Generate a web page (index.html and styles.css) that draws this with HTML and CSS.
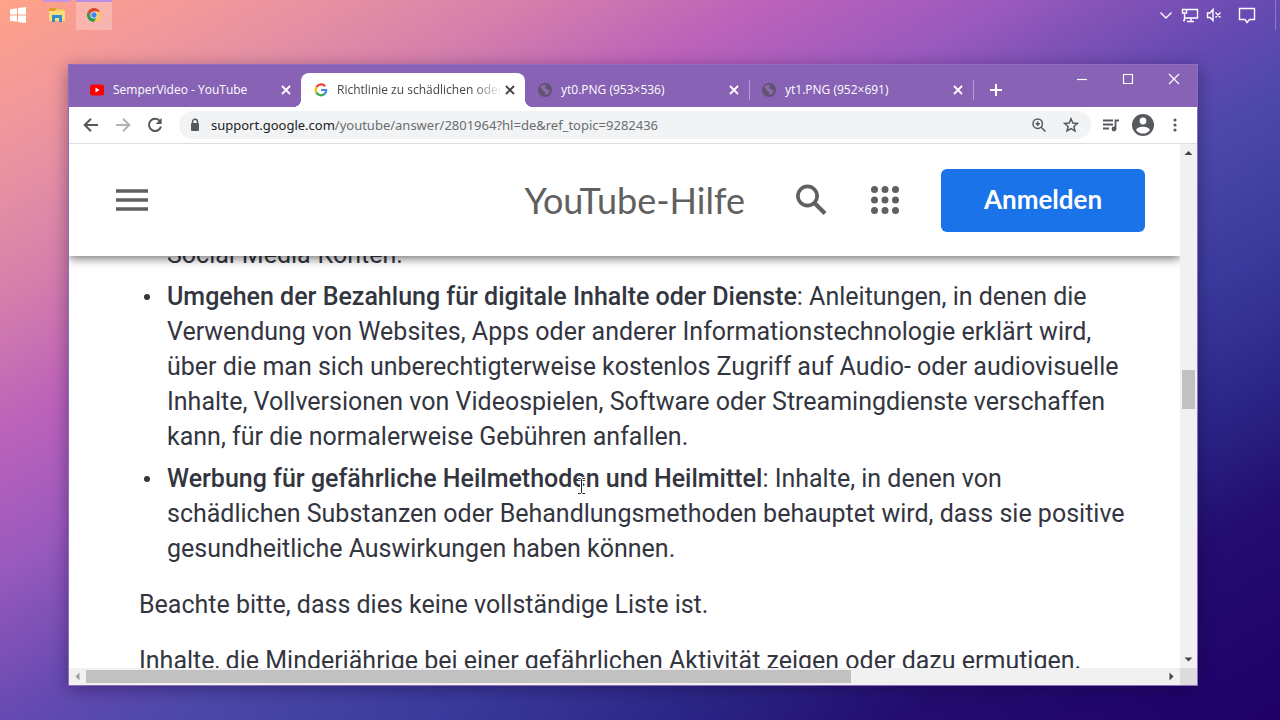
FILE: index.html
```html
<!DOCTYPE html>
<html lang="de">
<head>
<meta charset="utf-8">
<title>YouTube-Hilfe</title>
<link rel="stylesheet" href="styles.css">
</head>
<body class="desktop">
<header class="taskbar">
  <button class="task" aria-label="Start"><svg width="18" height="18" viewBox="0 0 18 18" fill="#fff"><path d="M1 3.2 8 2.2V8.5H1zM9 2 17 1V8.5H9zM1 9.5H8V15.8L1 14.8zM9 9.5H17V17L9 16z"/></svg></button>
  <button class="task task-files" aria-label="Explorer"><svg width="18" height="16" viewBox="0 0 18 16"><path d="M1 1h7l1 2v3H1z" fill="#dda126"/><path d="M1 4h6l1-2h8v3H1z" fill="#f3cd63"/><path d="M1 4h16v10H1z" fill="#fbdc7c"/><path d="M4 15V8h10v7h-3v-4H7v4z" fill="#2f8fcb"/></svg></button>
  <button class="task task-current" aria-label="Chrome"><svg width="16" height="16" viewBox="0 0 16 16"><circle cx="8" cy="8" r="7" fill="#fbc94a"/><path d="M1.9 4.5A7 7 0 0 1 14.1 4.5H8L5 9.8z" fill="#d9473a"/><path d="M1.9 4.5A7 7 0 0 0 7.9 15L11 9.8 5 9.8z" fill="#2f9a56"/><circle cx="8" cy="8" r="3.6" fill="#f6efe9"/><circle cx="8" cy="8" r="2.7" fill="#4285f4"/></svg></button>
  <div class="tray">
    <button class="tray-item" aria-label="Weitere Symbole"><svg width="14" height="16" viewBox="0 0 14 16"><path d="M1.500 5.500 7 11l5.500-5.500"/></svg></button>
    <button class="tray-item" aria-label="Netzwerk"><svg width="18" height="16" viewBox="0 0 18 16"><path d="M6 2.500H16.500V11H4M1.500 2.500H5.500V6H1.500zM3.500 6V13.500H2M10 11v3M6 14.500h7"/></svg></button>
    <button class="tray-item" aria-label="Ton aus"><svg width="16" height="16" viewBox="0 0 16 16"><path d="M1.500 6H4L7 2.500V13.500L4 10.500H1.500zM9.500 5.500l5 5M14.500 5.500l-5 5"/></svg></button>
    <button class="tray-item tray-notes" aria-label="Info-Center"><svg width="18" height="18" viewBox="0 0 18 18"><path d="M1.500 2.500H16.500V13.500H11.500L9 16.500 7 13.500H1.500z"/></svg></button>
  </div>
</header>

<main class="window">
  <div class="tabstrip">
    <div class="tabs">
      <div class="tab">
        <svg class="favicon" viewBox="0 0 16 16"><rect x="1" y="2.500" width="14" height="11" rx="2.500" fill="#f00"/><path d="M6.500 5.500v5L10.500 8z" fill="#fff"/></svg>
        <a class="tab-title" href="#">SemperVideo - YouTube</a>
        <button class="tab-close" aria-label="Tab schließen"><svg width="10" height="10" viewBox="0 0 10 10"><path d="M1 1l8 8M9 1 1 9"/></svg></button>
      </div>
      <div class="tab tab-active">
        <svg class="favicon" viewBox="0 0 16 16" fill="none" stroke-width="2.200"><path d="M12.200 4.200A5.300 5.300 0 0 0 3.400 5.400" stroke="#ea4335"/><path d="M3.400 5.400a5.300 5.300 0 0 0 0 5.200" stroke="#fbbc05"/><path d="M3.400 10.600a5.300 5.300 0 0 0 8.200 1.300" stroke="#34a853"/><path d="M11.600 11.900A5.300 5.300 0 0 0 13.200 8H8" stroke="#4285f4"/></svg>
        <a class="tab-title" href="#">Richtlinie zu schädlichen oder</a>
        <button class="tab-close" aria-label="Tab schließen"><svg width="10" height="10" viewBox="0 0 10 10"><path d="M1 1l8 8M9 1 1 9"/></svg></button>
      </div>
      <div class="tab tab-divided">
        <svg class="favicon" viewBox="0 0 16 16"><circle cx="8" cy="8" r="7" fill="#5f5370"/><path d="M3 5l2-2 4 0-1 3 3 2 2 0-2 4-3 1 0-3-2-1-1-2z" fill="#8b68ab"/></svg>
        <a class="tab-title" href="#">yt0.PNG (953×536)</a>
        <button class="tab-close" aria-label="Tab schließen"><svg width="10" height="10" viewBox="0 0 10 10"><path d="M1 1l8 8M9 1 1 9"/></svg></button>
      </div>
      <div class="tab tab-divided">
        <svg class="favicon" viewBox="0 0 16 16"><circle cx="8" cy="8" r="7" fill="#5f5370"/><path d="M3 5l2-2 4 0-1 3 3 2 2 0-2 4-3 1 0-3-2-1-1-2z" fill="#8b68ab"/></svg>
        <a class="tab-title" href="#">yt1.PNG (952×691)</a>
        <button class="tab-close" aria-label="Tab schließen"><svg width="10" height="10" viewBox="0 0 10 10"><path d="M1 1l8 8M9 1 1 9"/></svg></button>
      </div>
      <button class="new-tab" aria-label="Neuer Tab"><svg width="12" height="12" viewBox="0 0 12 12"><path d="M6 0v12M0 6h12"/></svg></button>
    </div>
    <div class="controls">
      <button class="control" aria-label="Minimieren"><svg width="12" height="12" viewBox="0 0 12 12"><path d="M1 6.500h10"/></svg></button>
      <button class="control" aria-label="Maximieren"><svg width="12" height="12" viewBox="0 0 12 12"><path d="M1.500 1.500h9v9h-9z"/></svg></button>
      <button class="control" aria-label="Schließen"><svg width="12" height="12" viewBox="0 0 12 12"><path d="M1 1l10 10M11 1 1 11"/></svg></button>
    </div>
  </div>

  <div class="toolbar">
    <button class="tool" aria-label="Zurück"><svg width="16" height="16" viewBox="0 0 16 16"><path d="M15 8H2M8 1.700 1.700 8 8 14.300"/></svg></button>
    <button class="tool tool-off" aria-label="Vorwärts"><svg width="16" height="16" viewBox="0 0 16 16"><path d="M1 8h13M8 1.700 14.300 8 8 14.300"/></svg></button>
    <button class="tool" aria-label="Neu laden"><svg width="16" height="16" viewBox="0 0 16 16"><path d="M13 4.200A6.100 6.100 0 1 0 14 9.500"/><path d="M14.700 1v6H8.700z" fill="#55585c" stroke="none"/></svg></button>
    <div class="omnibox">
      <svg class="lock" width="10" height="14" viewBox="0 0 10 14"><rect x="1" y="5" width="8" height="8" rx="1" fill="#55585c"/><path d="M2.500 5.500V3.800a2.500 2.500 0 0 1 5 0v1.700" fill="none" stroke="#55585c" stroke-width="1.400"/></svg>
      <a class="url" href="#"><span class="url-host">support.google.com</span>/youtube/answer/2801964?hl=de&amp;ref_topic=9282436</a>
      <button class="box-icon" aria-label="Zoom"><svg width="16" height="16" viewBox="0 0 16 16"><circle cx="6.700" cy="6.700" r="4.700"/><path d="M10.200 10.200 14.500 14.500M4.500 6.700h4.400M6.700 4.500v4.400"/></svg></button>
      <button class="box-icon" aria-label="Lesezeichen"><svg width="16" height="16" viewBox="0 0 16 16"><path d="M8 1.800 9.800 6l4.600.4-3.500 3 1.100 4.500L8 11.500l-4 2.400 1.100-4.500-3.500-3L6.200 6z"/></svg></button>
    </div>
    <button class="action" aria-label="Wiedergabeliste"><svg width="18" height="16" viewBox="0 0 18 16"><path d="M1 3.500h10M1 7.500h10M1 11.500h6M13.500 12V3.500H17" fill="none" stroke="#55585c" stroke-width="1.800"/><circle cx="12" cy="12" r="2.400" fill="#55585c"/></svg></button>
    <button class="action" aria-label="Profil"><svg width="22" height="22" viewBox="0 0 22 22"><circle cx="11" cy="11" r="11" fill="#55585c"/><circle cx="11" cy="7" r="3.400" fill="#fff"/><path d="M4.200 16.200c0-4.700 13.600-4.700 13.600 0a8.600 8.600 0 0 1-13.600 0z" fill="#fff"/></svg></button>
    <button class="action" aria-label="Menü"><svg width="4" height="14" viewBox="0 0 4 14" fill="#55585c"><circle cx="2" cy="2" r="1.600"/><circle cx="2" cy="7" r="1.600"/><circle cx="2" cy="12" r="1.600"/></svg></button>
  </div>

  <div class="page">
    <div class="viewport">
      <header class="site-header">
        <button class="plain" aria-label="Hauptmenü"><svg width="32" height="22" viewBox="0 0 32 22"><path d="M0 2h32M0 11h32M0 20h32" stroke="#606060" stroke-width="3.500"/></svg></button>
        <h1 class="site-title">YouTube-Hilfe</h1>
        <button class="plain search" aria-label="Suchen"><svg width="32" height="32" viewBox="0 0 32 32" fill="none" stroke="#606060"><circle cx="12.500" cy="12" r="9.600" stroke-width="3.600"/><path d="M19 18.500 30 29.500" stroke-width="4.200"/></svg></button>
        <button class="plain apps" aria-label="Google-Apps"><svg width="28" height="28" viewBox="0 0 28 28" fill="#606060"><circle cx="3.500" cy="3.500" r="3.500"/><circle cx="14" cy="3.500" r="3.500"/><circle cx="24.500" cy="3.500" r="3.500"/><circle cx="3.500" cy="14" r="3.500"/><circle cx="14" cy="14" r="3.500"/><circle cx="24.500" cy="14" r="3.500"/><circle cx="3.500" cy="24.500" r="3.500"/><circle cx="14" cy="24.500" r="3.500"/><circle cx="24.500" cy="24.500" r="3.500"/></svg></button>
        <button class="sign-in">Anmelden</button>
      </header>
      <article class="article">
        <ul class="list">
          <li class="item item-rest">Social-Media-Konten.</li>
          <li class="item"><strong>Umgehen der Bezahlung für digitale Inhalte oder Dienste</strong>: Anleitungen, in denen die Verwendung von Websites, Apps oder anderer Informationstechnologie erklärt wird, über die man sich unberechtigterweise kostenlos Zugriff auf Audio- oder audiovisuelle Inhalte, Vollversionen von Videospielen, Software oder Streamingdienste verschaffen kann, für die normalerweise Gebühren anfallen.</li>
          <li class="item"><strong>Werbung für gefährliche Heilmethoden und Heilmittel</strong>: Inhalte, in denen von schädlichen Substanzen oder Behandlungsmethoden behauptet wird, dass sie positive gesundheitliche Auswirkungen haben können.</li>
        </ul>
        <p class="para">Beachte bitte, dass dies keine vollständige Liste ist.</p>
        <p class="para">Inhalte, die Minderjährige bei einer gefährlichen Aktivität zeigen oder dazu ermutigen.</p>
      </article>
      <svg class="cursor" width="9" height="18" viewBox="0 0 9 18" fill="none"><path d="M1 1.500h2.500l1 1 1-1H8M4.500 2.500v13M1 16.500h2.500l1-1 1 1H8" stroke="#fff" stroke-width="3"/><path d="M1 1.500h2.500l1 1 1-1H8M4.500 2.500v13M1 16.500h2.500l1-1 1 1H8" stroke="#222"/></svg>
    </div>
    <div class="bar bar-v">
      <svg class="arrow" viewBox="0 0 17 17"><path d="M4.500 11h8l-4-4z"/></svg>
      <div class="track"><div class="thumb"></div></div>
      <svg class="arrow" viewBox="0 0 17 17"><path d="M4.500 6.500h8l-4 4z"/></svg>
    </div>
    <div class="bar bar-h">
      <svg class="arrow arrow-off" viewBox="0 0 17 17"><path d="M10.500 4.500v8l-4-4z"/></svg>
      <div class="track"><div class="thumb"></div></div>
      <svg class="arrow" viewBox="0 0 17 17"><path d="M6.500 4.500v8l4-4z"/></svg>
    </div>
    <div class="corner"></div>
  </div>
</main>
</body>
</html>
```
FILE: styles.css
```css
* { box-sizing: border-box; }

button {
  display: flex;
  align-items: center;
  justify-content: center;
  padding: 0;
  border: 0;
  background: none;
  color: inherit;
}

a { color: inherit; text-decoration: none; }

svg { display: block; flex: none; }

.desktop {
  display: flex;
  flex-direction: column;
  height: 100vh;
  margin: 0;
  overflow: hidden;
  font-family: "Open Sans", "Noto Sans", sans-serif;
  background: linear-gradient(to bottom right,
    #ffa388 0%, #f2989a 8%, #e48fa4 14%, #d47eac 21%, #bc62ba 30%,
    #9c5abe 39%, #7e51b6 45%, #664ab2 50%, #4b48a9 57%, #3a3a9c 67%,
    #2a2484 77%, #230c70 85%, #1f0068 100%);
}

/* Taskbar */
.taskbar {
  display: flex;
  height: 30px;
  flex: none;
}

.task { width: 36px; padding-bottom: 2px; border-top: 2px solid transparent; }
.task-files { width: 28px; margin: 0 5px 0 7px; border-top-color: #c795e0; }
.task-current { border-top-color: #bd8de6; background: rgba(255, 255, 255, 0.25); }
.task-current, .task-files { flex: none; }

.tray { display: flex; margin-left: auto; padding-right: 7px; border-right: 1px solid #8580cc; margin-right: 4px; }
.tray-item { width: 24px; }
.tray-item svg { fill: none; stroke: #fff; stroke-width: 1.4; }
.tray-notes { width: 42px; }

/* Browser window */
.window {
  display: flex;
  flex: 1;
  flex-direction: column;
  min-height: 0;
  margin: 34px 82px 34px 68px;
  border: 1px solid #8e6cbf;
  background: #fff;
  box-shadow: 0 4px 16px rgba(20, 0, 50, 0.4);
}

.tabstrip {
  display: flex;
  justify-content: space-between;
  height: 42px;
  flex: none;
  background: #8762b5;
  color: #fff;
}

.tabs { display: flex; align-items: flex-end; padding-left: 8px; }

.tab {
  position: relative;
  display: flex;
  align-items: center;
  gap: 8px;
  width: 224px;
  height: 34px;
  padding: 0 7px 0 12px;
}

.favicon { width: 16px; height: 16px; }

.tab-title {
  flex: 1;
  overflow: hidden;
  font-size: 12px;
  line-height: 20px;
  white-space: nowrap;
}

.tab-close { width: 16px; height: 16px; }
.tab-close svg { fill: none; stroke: #fff; stroke-width: 1.8; }

.tab-active { border-radius: 8px 8px 0 0; background: #fff; color: #45474a; }
.tab-active .tab-title { margin-right: -8px; mask-image: linear-gradient(to right, #000 82%, transparent); }
.tab-active .tab-close svg { stroke: #3c4043; }
.tab-active::before, .tab-active::after {
  position: absolute;
  bottom: 0;
  width: 8px;
  height: 8px;
  content: "";
}
.tab-active::before { right: 100%; background: radial-gradient(circle at 0 0, transparent 8px, #fff 8px); }
.tab-active::after { left: 100%; background: radial-gradient(circle at 100% 0, transparent 8px, #fff 8px); }

.tab-divided::after {
  position: absolute;
  right: -1px;
  width: 1px;
  height: 20px;
  background: #b99bdb;
  content: "";
}

.new-tab { width: 46px; height: 34px; }
.new-tab svg { stroke: #fff; stroke-width: 2; }

.controls { display: flex; height: 28px; }
.control { width: 46px; }
.control svg { fill: none; stroke: #fff; stroke-width: 1.2; }

.toolbar {
  display: flex;
  align-items: center;
  height: 37px;
  flex: none;
  padding: 0 6px;
  border-bottom: 1px solid #dcdee0;
}

.tool { width: 32px; height: 28px; }
.tool svg { fill: none; stroke: #55585c; stroke-width: 2; }
.tool-off { opacity: 0.45; }

.omnibox {
  display: flex;
  flex: 1;
  align-items: center;
  height: 28px;
  margin: 0 4px 0 8px;
  padding: 0 4px 0 11px;
  border-radius: 14px;
  background: #f1f3f4;
}

.url {
  flex: 1;
  margin-left: 11px;
  color: #6a6d71;
  font: 400 13px/20px "Noto Sans", "Open Sans", sans-serif;
}
.url-host { color: #202124; }

.box-icon { width: 32px; height: 28px; }
.box-icon svg { fill: none; stroke: #55585c; stroke-width: 1.5; }

.action { width: 32px; height: 28px; }

/* Page area with its scroll bars */
.page {
  display: grid;
  flex: 1;
  grid-template: minmax(0, 1fr) 17px / minmax(0, 1fr) 17px;
  min-height: 0;
}

.viewport { position: relative; overflow: hidden; }

.site-header {
  position: absolute;
  z-index: 1;
  top: 0;
  left: 0;
  right: 0;
  display: flex;
  align-items: center;
  height: 112px;
  padding: 0 35px 0 47px;
  background: #fff;
  box-shadow: 0 2px 10px rgba(0, 0, 0, 0.6);
}

.site-title {
  margin: 0 50px 0 auto;
  color: #606060;
  font: 400 36px/48px Lato, sans-serif;
}

.apps { margin: 0 42px 0 44px; }

.sign-in {
  width: 204px;
  height: 63px;
  padding-bottom: 3px;
  border-radius: 6px;
  background: #1a73e8;
  color: #fff;
  font: 700 26px/32px Lato, sans-serif;
}

.article {
  padding: 93px 50px 0 70px;
  color: #33353f;
  font: 400 25px/35px Roboto, sans-serif;
}

.list { margin: 0; padding: 0 0 0 28px; list-style: none; }
.item { position: relative; margin-bottom: 7px; }
.item::before {
  position: absolute;
  top: 15px;
  left: -23px;
  width: 6px;
  height: 6px;
  border-radius: 50%;
  background: #33353f;
  content: "";
}
.item-rest::before { content: none; }
.item strong { font-weight: 500; }

.cursor { position: absolute; top: 333px; left: 508px; }

.para { margin: 21px 0 0; }

.bar { display: flex; background: #f1f1f1; }
.bar-v { flex-direction: column; }
.arrow { width: 17px; height: 17px; fill: #45474a; }
.arrow-off { fill: #a0a0a0; }
.track { display: flex; flex: 1; }
.thumb { background: #c1c1c1; }
.bar-v .track { flex-direction: column; padding: 0 2px; }
.bar-v .thumb { height: 8%; margin-top: 209px; }
.bar-h .track { padding: 2px 0; }
.bar-h .thumb { width: 71%; }
.corner { background: #dcdcdc; }
```
